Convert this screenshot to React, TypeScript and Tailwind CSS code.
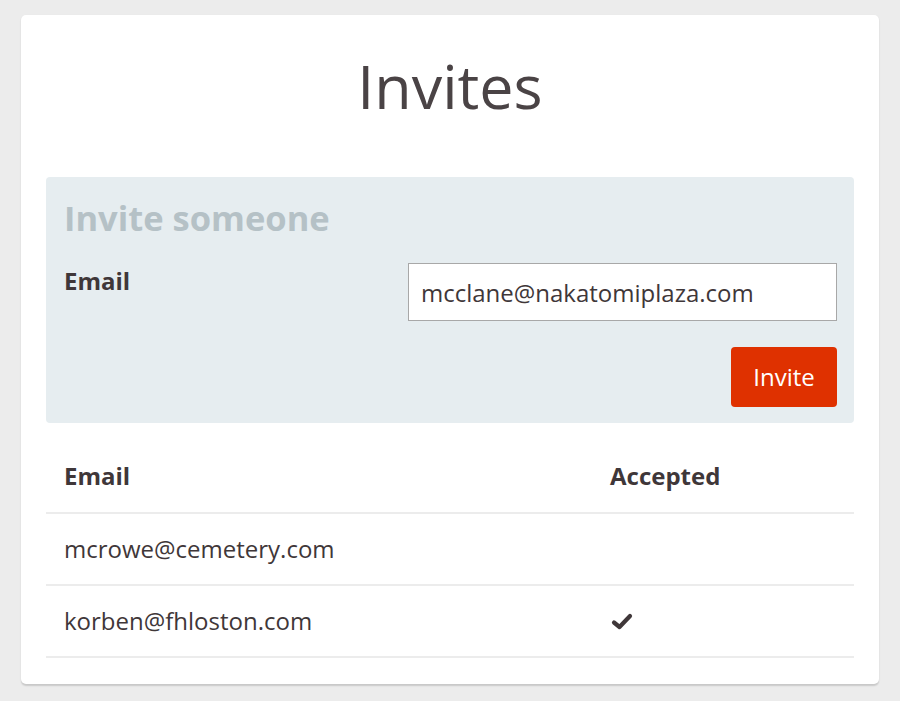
const invites = [
  { email: "mcrowe@cemetery.com", accepted: false },
  { email: "korben@fhloston.com", accepted: true },
]

function Check() {
  return (
    <svg width="22" height="17" viewBox="0 0 22 17" className="block">
      <polyline
        points="3,9.5 8.5,14 19,3"
        fill="none"
        stroke="#3f3739"
        strokeWidth="4.2"
        strokeLinecap="round"
        strokeLinejoin="round"
      />
    </svg>
  )
}

export default function App() {
  return (
    <div className="min-h-[701px] bg-[#ececec] pt-[15px] px-[21px] font-['Open_Sans',sans-serif] text-[#3f3739]">
      <div className="bg-white rounded-[5px] shadow-[0_1.5px_1.5px_rgba(0,0,0,0.15)] px-[25px] pb-[26px]">
        <h1 className="text-center text-[61px] leading-none font-normal text-[#4a4345] pt-[40px] pb-[61px]">
          Invites
        </h1>

        <div className="bg-[#e6edf0] rounded-[4px] pl-[18px] pr-[17px] pt-[24px] pb-[16px]">
          <h2 className="text-[34.5px] leading-none font-bold text-[#b5c1c6]">Invite someone</h2>
          <div className="flex justify-between mt-[27.5px]">
            <label className="text-[24px] leading-none font-bold pt-[6px]">Email</label>
            <input
              type="email"
              defaultValue="mcclane@nakatomiplaza.com"
              className="w-[429px] h-[58px] bg-white border-[1.5px] border-[#a8a8a8] px-[12px] text-[24px] text-[#3f3739] outline-none"
            />
          </div>
          <div className="flex justify-end mt-[26px]">
            <button className="w-[106px] h-[60px] bg-[#df3100] rounded-[4px] text-white text-[24px] leading-none">
              Invite
            </button>
          </div>
        </div>

        <div className="mt-[17px]">
          <div className="flex border-b-2 border-[#ececec] py-[24px] text-[24px] leading-none font-bold">
            <div className="w-[546px] pl-[18px]">Email</div>
            <div className="pl-[18px]">Accepted</div>
          </div>
          {invites.map((inv) => (
            <div key={inv.email} className="flex items-center h-[72px] border-b-2 border-[#ececec] text-[24px] leading-none">
              <div className="w-[546px] pl-[18px]">{inv.email}</div>
              <div className="pl-[19px]">{inv.accepted && <Check />}</div>
            </div>
          ))}
        </div>
      </div>
    </div>
  )
}
